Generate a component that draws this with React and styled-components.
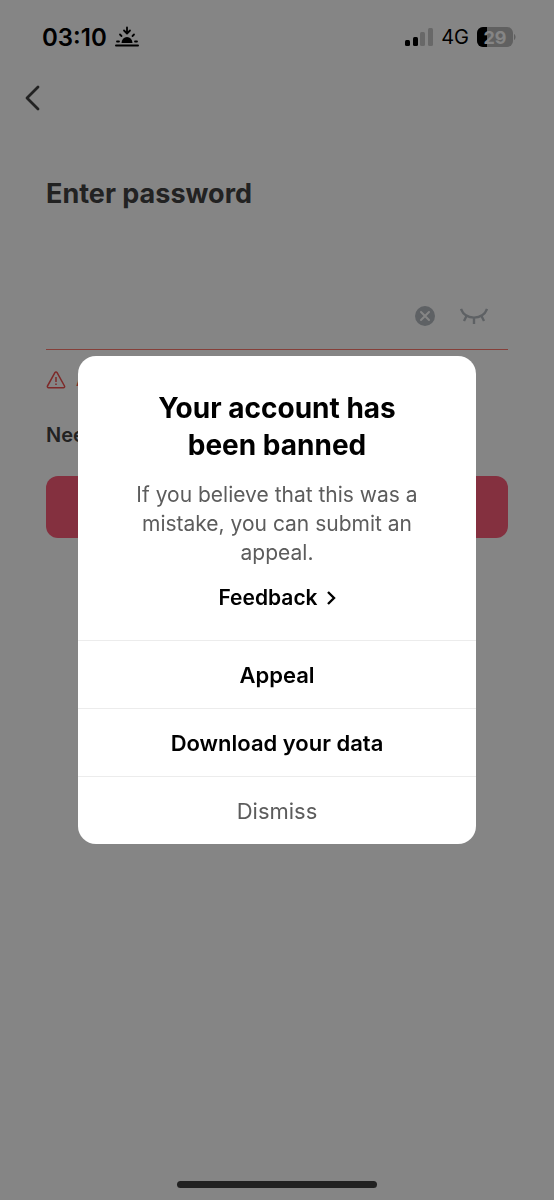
import React from "react";
import styled, { createGlobalStyle } from "styled-components";

const GlobalStyle = createGlobalStyle`
  * {
    box-sizing: border-box;
  }
  body {
    margin: 0;
    background: #fff;
    font-family: Inter, "Liberation Sans", sans-serif;
  }
  button, input {
    font-family: inherit;
  }
`;

const Page = styled.main`
  display: flex;
  flex-direction: column;
  min-height: 100vh;
`;

const StatusBar = styled.header`
  display: flex;
  justify-content: space-between;
  align-items: center;
  height: 74px;
  padding: 0 38px 0 42px;
  color: #000;
`;

const StatusGroup = styled.div`
  display: flex;
  align-items: center;
  gap: 8px;
`;

const Time = styled.span`
  font-size: 24px;
  font-weight: 600;
`;

const Network = styled.span`
  font-size: 20px;
`;

const BackButton = styled.button`
  display: flex;
  align-self: flex-start;
  margin-left: 24px;
  padding: 10px 0 8px;
  border: 0;
  background: none;
  color: #414141;
`;

const Form = styled.form`
  display: flex;
  flex-direction: column;
  padding: 0 46px;
`;

const Heading = styled.label`
  margin-top: 56px;
  color: #414141;
  font-size: 27px;
  font-weight: 700;
  line-height: 36px;
`;

const Field = styled.div`
  display: flex;
  align-items: center;
  gap: 24px;
  height: 68px;
  margin-top: 70px;
  padding-right: 20px;
  border-bottom: 1px solid #ff7a6e;
`;

const PasswordInput = styled.input`
  flex: 1;
  min-width: 0;
  height: 40px;
  border: 0;
  outline: 0;
  background: none;
  font-size: 22px;
`;

const IconButton = styled.button`
  display: flex;
  padding: 0;
  border: 0;
  background: none;
  color: #b4bac0;
`;

const ErrorMessage = styled.p`
  display: flex;
  align-items: center;
  gap: 10px;
  margin: 17px 0 0;
  color: #f0504f;
  font-size: 18px;
  line-height: 26px;
`;

const HelpLink = styled.a`
  align-self: flex-start;
  margin-top: 28px;
  color: #414141;
  font-size: 20px;
  font-weight: 600;
  line-height: 28px;
  text-decoration: none;
`;

const SubmitButton = styled.button`
  height: 62px;
  margin-top: 27px;
  border: 0;
  border-radius: 12px;
  background: #fe5c79;
`;

const HomeIndicator = styled.div`
  width: 36%;
  height: 7px;
  margin: auto auto 12px;
  border-radius: 4px;
  background: #414141;
`;

const Overlay = styled.div`
  position: fixed;
  inset: 0;
  display: flex;
  align-items: center;
  justify-content: center;
  padding: 0 78px;
  background: rgba(0, 0, 0, 0.48);
`;

const Dialog = styled.section`
  width: 100%;
  overflow: hidden;
  border-radius: 18px;
  background: #fff;
  text-align: center;
`;

const DialogBody = styled.div`
  display: flex;
  flex-direction: column;
  align-items: center;
  padding: 34px 48px 28px;
`;

const DialogTitle = styled.h1`
  margin: 0;
  color: #000;
  font-size: 28px;
  font-weight: 700;
  line-height: 37px;
`;

const DialogText = styled.p`
  margin: 16px 0 17px;
  color: #5c5c5c;
  font-size: 21px;
  line-height: 29px;
`;

const FeedbackLink = styled.a`
  display: flex;
  align-items: center;
  gap: 8px;
  color: #000;
  font-size: 21px;
  font-weight: 600;
  line-height: 28px;
  text-decoration: none;
`;

const DialogAction = styled.button`
  display: block;
  width: 100%;
  height: 68px;
  padding: 0;
  border: 0;
  border-top: 1px solid #ececec;
  background: none;
  color: ${props => (props.$muted ? "#5c5c5c" : "#000")};
  font-size: 22px;
  font-weight: ${props => (props.$muted ? 400 : 600)};
`;

const SunsetIcon = () => (
  <svg width="24" height="22" viewBox="0 0 24 22" fill="none" stroke="currentColor" strokeWidth="2" strokeLinecap="round" strokeLinejoin="round" aria-hidden="true">
    <path d="M12 1.500v5.500M9 4.500l3 3 3-3M5 8.500l1.500 1.500M19 8.500 17.500 10M2 15.500h2M20 15.500h2" strokeWidth="1.800" />
    <path d="M6.500 17a5.500 6 0 0 1 11 0z" fill="currentColor" stroke="none" />
    <path d="M1 19.500h22" />
  </svg>
);

const SignalIcon = () => (
  <svg width="28" height="18" viewBox="0 0 28 18" fill="currentColor" aria-hidden="true">
    <rect x="0" y="12" width="5" height="6" rx="1.500" />
    <rect x="8" y="9" width="5" height="9" rx="1.500" />
    <rect x="15" y="4" width="5" height="14" rx="1.500" opacity="0.22" />
    <rect x="23" y="0" width="5" height="18" rx="1.500" opacity="0.22" />
  </svg>
);

const BatteryIcon = () => (
  <svg width="39" height="20" viewBox="0 0 39 20" role="img" aria-label="Battery 29%">
    <rect width="36" height="20" rx="6" fill="#b8b8b8" />
    <path d="M6 0h4v20H6a6 6 0 0 1-6-6V6a6 6 0 0 1 6-6z" fill="#000" />
    <path d="M37 7c2 1 2 5 0 6z" fill="#b8b8b8" />
    <text x="18" y="16.500" textAnchor="middle" fontSize="18" fontWeight="700" fill="#fff">29</text>
  </svg>
);

const BackIcon = () => (
  <svg width="18" height="28" viewBox="0 0 18 28" fill="none" stroke="currentColor" strokeWidth="2.800" strokeLinecap="round" strokeLinejoin="round" aria-hidden="true">
    <path d="M14 3 3 14l11 11" />
  </svg>
);

const ClearIcon = () => (
  <svg width="22" height="22" viewBox="0 0 22 22" fill="none" aria-hidden="true">
    <circle cx="11" cy="11" r="10" fill="currentColor" />
    <path d="m7 7 8 8M15 7l-8 8" stroke="#fff" strokeWidth="2" strokeLinecap="round" />
  </svg>
);

const ClosedEyeIcon = () => (
  <svg width="28" height="18" viewBox="0 0 28 18" fill="none" stroke="currentColor" strokeWidth="2.400" aria-hidden="true">
    <path d="M1 2c4 11.500 22 11.500 26 0M6.500 9 4 14M14 10.500V17M21.500 9l2.500 5" />
  </svg>
);

const WarningIcon = () => (
  <svg width="20" height="18" viewBox="0 0 20 18" fill="none" stroke="currentColor" strokeWidth="1.500" strokeLinejoin="round" aria-hidden="true">
    <path d="M8.900 1.700a1.300 1.300 0 0 1 2.200 0l7.400 13.300a1.200 1.200 0 0 1-1.100 1.800H2.600A1.200 1.200 0 0 1 1.500 15z" />
    <path d="M10 6v5M10 12.500V14" />
  </svg>
);

const ChevronIcon = () => (
  <svg width="10" height="14" viewBox="0 0 10 14" fill="none" stroke="currentColor" strokeWidth="2.400" aria-hidden="true">
    <path d="m2 1 6 6-6 6" />
  </svg>
);

const actions = [
  { label: "Appeal" },
  { label: "Download your data" },
  { label: "Dismiss", muted: true }
];

const BannedDialog = () => (
  <Overlay>
    <Dialog role="dialog" aria-modal="true" aria-labelledby="dialog-title">
      <DialogBody>
        <DialogTitle id="dialog-title">Your account has been banned</DialogTitle>
        <DialogText>
          If you believe that this was a mistake, you can submit an appeal.
        </DialogText>
        <FeedbackLink href="#feedback">
          Feedback
          <ChevronIcon />
        </FeedbackLink>
      </DialogBody>
      {actions.map(({ label, muted }) => (
        <DialogAction key={label} type="button" $muted={muted}>
          {label}
        </DialogAction>
      ))}
    </Dialog>
  </Overlay>
);

const App = () => (
  <>
    <GlobalStyle />
    <Page>
      <StatusBar>
        <StatusGroup>
          <Time>03:10</Time>
          <SunsetIcon />
        </StatusGroup>
        <StatusGroup>
          <SignalIcon />
          <Network>4G</Network>
          <BatteryIcon />
        </StatusGroup>
      </StatusBar>
      <BackButton type="button" aria-label="Back">
        <BackIcon />
      </BackButton>
      <Form>
        <Heading htmlFor="password">Enter password</Heading>
        <Field>
          <PasswordInput id="password" type="password" />
          <IconButton type="button" aria-label="Clear">
            <ClearIcon />
          </IconButton>
          <IconButton type="button" aria-label="Show password">
            <ClosedEyeIcon />
          </IconButton>
        </Field>
        <ErrorMessage>
          <WarningIcon />
          Account
        </ErrorMessage>
        <HelpLink href="#help">Need</HelpLink>
        <SubmitButton type="submit" aria-label="Log in" />
      </Form>
      <HomeIndicator />
    </Page>
    <BannedDialog />
  </>
);

export default App;
